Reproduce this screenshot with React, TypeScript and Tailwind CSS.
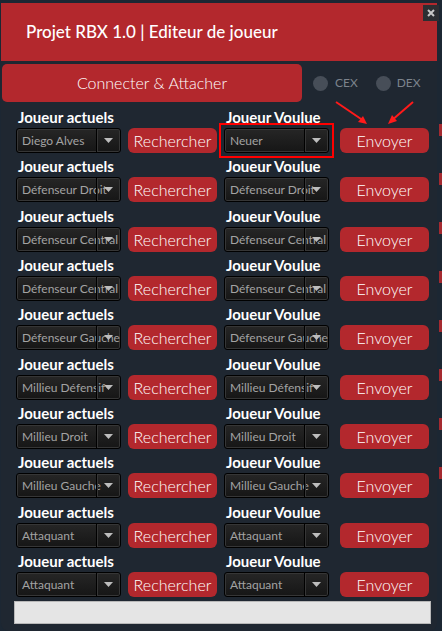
import React from 'react';

interface Row {
  current: string;
  wanted: string;
}

const rows: Row[] = [
  { current: 'Diego Alves', wanted: 'Neuer' },
  { current: 'Défenseur Droit', wanted: 'Défenseur Droit' },
  { current: 'Défenseur Central', wanted: 'Défenseur Central' },
  { current: 'Défenseur Central', wanted: 'Défenseur Central' },
  { current: 'Défenseur Gauche', wanted: 'Défenseur Gauche' },
  { current: 'Millieu Défensif', wanted: 'Millieu Défensif' },
  { current: 'Millieu Droit', wanted: 'Millieu Droit' },
  { current: 'Millieu Gauche', wanted: 'Millieu Gauche' },
  { current: 'Attaquant', wanted: 'Attaquant' },
  { current: 'Attaquant', wanted: 'Attaquant' },
];

function Combo({ value }: { value: string }) {
  return (
    <div className="relative h-[25px] w-[105px] overflow-hidden rounded-[3px] border border-black bg-gradient-to-b from-[#262626] to-[#161616] shadow-[inset_0_0_0_1px_#363636]">
      <div className="whitespace-nowrap pl-[5px] text-[12px] leading-[23px] text-[#a3a3a3]">
        {value}
      </div>
      {/* drop-down arrow sits over the text */}
      <div className="absolute right-0 top-0 flex h-full w-[24px] items-center justify-center border-l border-black shadow-[inset_1px_0_0_#363636]">
        <svg width="9" height="5" viewBox="0 0 9 5">
          <path d="M0 0h9L4.5 5z" fill="#bdbdbd" />
        </svg>
      </div>
    </div>
  );
}

function RedButton({ label, className }: { label: string; className?: string }) {
  return (
    <button
      className={`h-[25px] w-[89px] rounded-[6px] bg-[#b3282d] text-[16px] font-light leading-[25px] text-white ${className ?? ''}`}
    >
      {label}
    </button>
  );
}

export default function App() {
  return (
    <div
      className="flex h-[631px] w-[442px] overflow-hidden bg-[#1c2733]"
      style={{ fontFamily: 'Lato, "Open Sans", sans-serif' }}
    >
      <div className="ml-[1px] mt-[3px] flex w-[436px] flex-col rounded-b-[8px] bg-[#1f2731]">
        {/* title bar */}
        <div className="relative flex h-[58px] items-center bg-[#b3282d] pl-[25px] text-[17px] font-medium text-white">
          Projet RBX 1.0 | Editeur de joueur
          <div className="absolute right-[-2px] top-[2px] flex h-[16px] w-[16px] items-center justify-center bg-[#2c2e32]">
            <svg width="8" height="8" viewBox="0 0 8 8">
              <path d="M1 1l6 6M7 1L1 7" stroke="#c8c8c8" strokeWidth="2" />
            </svg>
          </div>
        </div>

        {/* connect row */}
        <div className="relative mt-[3px] flex h-[38px] items-center">
          <button className="ml-[1px] h-[38px] w-[300px] rounded-[5px] bg-[#b3282d] text-[16px] font-light text-white">
            Connecter &amp; Attacher
          </button>
          <div className="ml-[11px] h-[15px] w-[15px] rounded-full bg-[#474e58]" />
          <span className="ml-[7px] text-[12px] text-[#7c838c]">CEX</span>
          <div className="ml-[18px] h-[15px] w-[15px] rounded-full bg-[#474e58]" />
          <span className="ml-[6px] text-[12px] text-[#7c838c]">DEX</span>
          <svg className="absolute left-[330px] top-[37px]" width="90" height="26" viewBox="0 0 90 26">
            <path d="M5 1L33 20" stroke="#ff1a1a" strokeWidth="2" />
            <path d="M27 21l9 2-4-8z" fill="#ff1a1a" />
            <path d="M82 1L60 20" stroke="#ff1a1a" strokeWidth="2" />
            <path d="M57 23l9-3-5-6z" fill="#ff1a1a" />
          </svg>
        </div>

        {/* player rows */}
        <div className="mt-[4px] flex flex-col">
          {rows.map((row, i) => (
            <div key={i} className="flex h-[49.33px] flex-col">
              <div className="flex h-[22px] items-end pb-[3px] text-[15px] font-bold leading-none text-white">
                <span className="ml-[17px] w-[208px]">Joueur actuels</span>
                <span>Joueur Voulue</span>
              </div>
              <div className="flex items-center">
                <div className="ml-[15px]">
                  <Combo value={row.current} />
                </div>
                <RedButton label="Rechercher" className="ml-[7px]" />
                <div
                  className={`ml-[7px] ${i === 0 ? 'outline-2 outline-offset-[3px] outline-[#ff0000]' : ''}`}
                >
                  <Combo value={row.wanted} />
                </div>
                <RedButton label="Envoyer" className="ml-[11px]" />
              </div>
            </div>
          ))}
        </div>

        {/* progress bar */}
        <div className="ml-[13px] mt-[2px] h-[23px] w-[417px] border border-[#b8b8b8] bg-[#e5e5e5]" />
      </div>

      {/* stuff behind the window on the right */}
      <div className="ml-[2px] flex w-[3px] flex-col">
        <div className="mt-[124px] h-[12px] bg-[#a52a30]" />
        <div className="mt-[37px] h-[12px] bg-[#a52a30]" />
        <div className="mt-[37px] h-[12px] bg-[#a52a30]" />
        <div className="mt-[37px] h-[12px] bg-[#a52a30]" />
        <div className="mt-[37px] h-[12px] bg-[#a52a30]" />
        <div className="mt-[37px] h-[12px] bg-[#a52a30]" />
        <div className="mt-[37px] h-[12px] bg-[#a52a30]" />
        <div className="mt-[37px] h-[12px] bg-[#a52a30]" />
      </div>
    </div>
  );
}
